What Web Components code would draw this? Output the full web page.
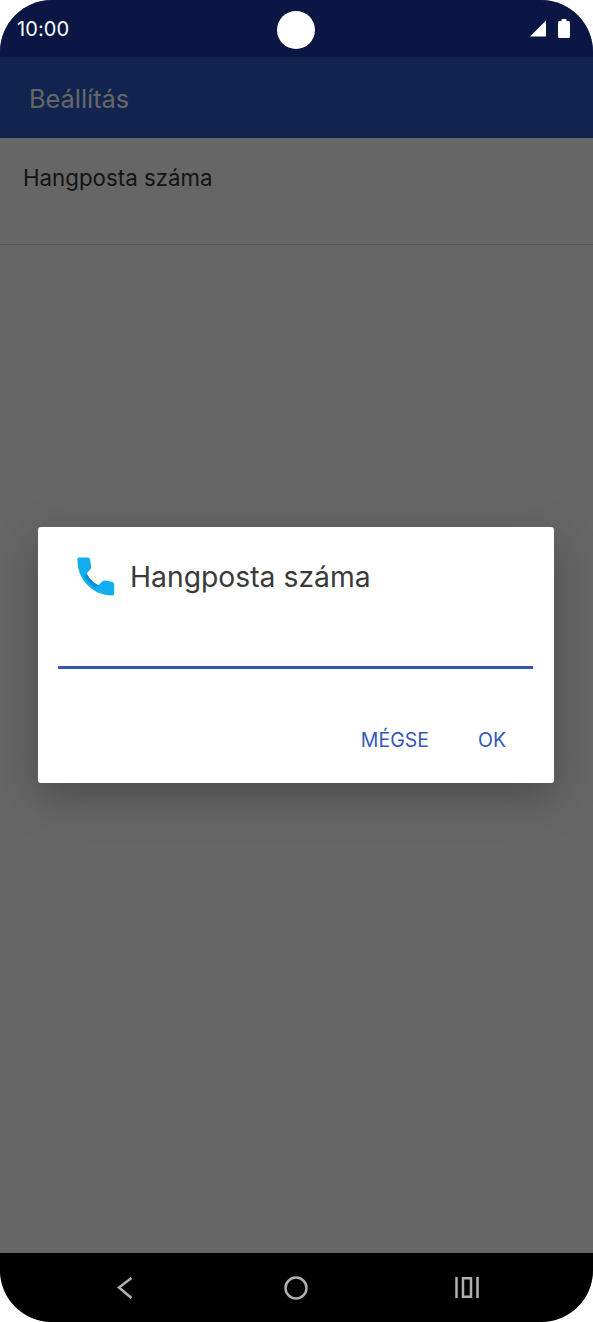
<!DOCTYPE html>
<html lang="hu">
<head>
<meta charset="utf-8">
<title>Hangposta száma</title>
<style>
html, body { margin: 0; padding: 0; background: #fff; }
body { font-family: Inter, "Open Sans", sans-serif; }
</style>
</head>
<body>
<phone-screen>
	<status-bar slot="top" time="10:00"></status-bar>
	<app-bar title="Beállítás"></app-bar>
	<list-row>Hangposta száma</list-row>
	<number-dialog slot="overlay" heading="Hangposta száma">
		<dialog-button>MÉGSE</dialog-button>
		<dialog-button>OK</dialog-button>
	</number-dialog>
	<nav-bar slot="bottom"></nav-bar>
</phone-screen>

<script>
// helper: open shadow root with given markup
function shadow(el, html) {
	const root = el.attachShadow({ mode: "open" });
	root.innerHTML = html;
	return root;
}

// <phone-screen>
class PhoneScreen extends HTMLElement {
	constructor() {
		super();
		shadow(this, `
<style>
:host { display: flex; flex-direction: column; width: 593px; height: 1322px; border-radius: 52px; overflow: hidden; background: #666; }
main { position: relative; flex: 1; display: flex; flex-direction: column; min-height: 0; }
.content { flex: 1; background: #fff; }
.scrim { position: absolute; inset: 0; background: rgba(0,0,0,.6); display: flex; align-items: center; justify-content: center; padding-right: 1px; }
</style>
<slot name="top"></slot>
<main>
	<div class="content"><slot></slot></div>
	<div class="scrim"><slot name="overlay"></slot></div>
</main>
<slot name="bottom"></slot>`);
	}
}

// <status-bar>
class StatusBar extends HTMLElement {
	constructor() {
		super();
		const root = shadow(this, `
<style>
:host { display: flex; align-items: center; justify-content: space-between; height: 57px; padding: 0 23px 0 17px; box-sizing: border-box; background: #0b1645; color: #fff; position: relative; flex: none; }
.time { font: 400 20px Inter, sans-serif; letter-spacing: .1px; margin-top: 1px; }
.camera { position: absolute; left: 277px; top: 11px; width: 38px; height: 38px; border-radius: 50%; background: #fff; }
.icons { display: flex; align-items: center; gap: 12px; }
svg { display: block; }
</style>
<span class="time"></span>
<div class="camera"></div>
<div class="icons">
	<svg width="16" height="17" viewBox="0 0 16 17"><path d="M16 0.5V16.5H0Z" fill="#fff"/></svg>
	<svg width="12" height="19" viewBox="0 0 12 19"><path d="M3.500 0H8.500V2H10.500Q12 2 12 3.500V17.500Q12 19 10.500 19H1.500Q0 19 0 17.500V3.500Q0 2 1.500 2H3.500Z" fill="#fff"/></svg>
</div>`);
		root.querySelector(".time").textContent = this.getAttribute("time");
	}
}

// <app-bar>
class AppBar extends HTMLElement {
	constructor() {
		super();
		const root = shadow(this, `
<style>
:host { display: flex; align-items: center; height: 81px; padding-left: 29px; box-sizing: border-box; background: #2b5bc6; }
span { font: 400 25.3px Inter, sans-serif; color: #fff; margin-top: 2px; }
</style>
<span></span>`);
		root.querySelector("span").textContent = this.getAttribute("title");
	}
}

// <list-row>
class ListRow extends HTMLElement {
	constructor() {
		super();
		shadow(this, `
<style>
:host { display: block; height: 107px; padding: 26px 0 0 23px; box-sizing: border-box; border-bottom: 1px solid #dedede; font: 400 22.3px/27px Inter, sans-serif; color: #333; }
</style>
<slot></slot>`);
	}
}

// <number-dialog>
class NumberDialog extends HTMLElement {
	constructor() {
		super();
		const root = shadow(this, `
<style>
:host { display: flex; flex-direction: column; width: 516px; height: 256px; box-sizing: border-box; background: #fff; border-radius: 3px; box-shadow: 0 14px 44px rgba(0,0,0,.26); }
header { display: flex; align-items: center; gap: 15px; padding: 28px 0 0 38px; height: 44px; }
h2 { margin: 0; font: 400 28.3px Inter, sans-serif; color: #3a3a3a; }
svg { display: block; flex: none; margin-top: -1px; }
.field { height: 3px; margin: 67px 21px 0 20px; background: #3558b8; }
.actions { display: flex; justify-content: flex-end; gap: 49px; padding: 59px 48px 0 0; }
</style>
<header>
	<svg width="39" height="39" viewBox="1 0.500 37.500 38">
		<path d="M2 3Q2 1 4 1H12.500Q14 1 14.500 3L15.500 10Q15.500 12 14.500 13L11 16.500Q16 25 22.500 28L26 24.500Q27 23.500 29 23.500L36 24.500Q38 25 38 27V35.500Q38 38 35.500 38Q22 38 12 28Q2 18 2 3Z" fill="#12aef0"/>
		<path d="M11 16.500Q16 25 22.500 28L19.500 31Q13.500 26 8.500 19Z" fill="#0b8fd0"/>
	</svg>
	<h2></h2>
</header>
<div class="field"></div>
<div class="actions"><slot></slot></div>`);
		root.querySelector("h2").textContent = this.getAttribute("heading");
	}
}

// <dialog-button>
class DialogButton extends HTMLElement {
	constructor() {
		super();
		shadow(this, `
<style>
:host { display: block; font: 400 19.5px/24px Inter, sans-serif; color: #3558b8; }
</style>
<slot></slot>`);
	}
}

// <nav-bar>
class NavBar extends HTMLElement {
	constructor() {
		super();
		shadow(this, `
<style>
:host { display: flex; align-items: center; justify-content: space-between; height: 69px; padding: 0 114px 0 116px; box-sizing: border-box; background: #000; flex: none; }
svg { display: block; }
.home { margin-left: 3px; }
</style>
<svg width="18" height="24" viewBox="0 0 18 24"><path d="M15.500 2L3 11.500L15.500 22" fill="none" stroke="#b0b0b0" stroke-width="2.500"/></svg>
<svg class="home" width="24" height="24" viewBox="0 0 24 24"><circle cx="12" cy="12" r="10.500" fill="none" stroke="#b0b0b0" stroke-width="2.500"/></svg>
<svg width="24" height="21" viewBox="0 0 24 21"><path d="M1.500 0V21M22.500 0V21M8 1.200H16V19.800H8Z" fill="none" stroke="#b0b0b0" stroke-width="2.500"/></svg>`);
	}
}

customElements.define("phone-screen", PhoneScreen);
customElements.define("status-bar", StatusBar);
customElements.define("app-bar", AppBar);
customElements.define("list-row", ListRow);
customElements.define("number-dialog", NumberDialog);
customElements.define("dialog-button", DialogButton);
customElements.define("nav-bar", NavBar);
</script>
</body>
</html>
